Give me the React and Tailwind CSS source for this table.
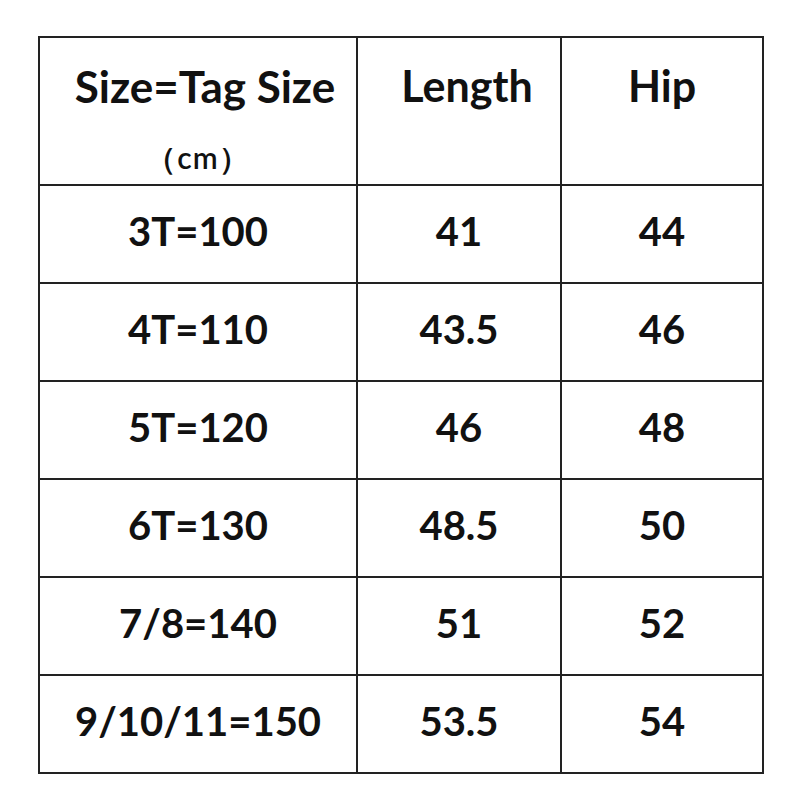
import React from "react";

const rows = [
  ["3T=100", "41", "44"],
  ["4T=110", "43.5", "46"],
  ["5T=120", "46", "48"],
  ["6T=130", "48.5", "50"],
  ["7/8=140", "51", "52"],
  ["9/10/11=150", "53.5", "54"],
];

export default function App() {
  return (
    <div className="w-[800px] h-[800px] bg-white pt-[36px] pl-[38px]" style={{ fontFamily: "Lato, 'Open Sans', sans-serif" }}>
      <table className="border-collapse text-[#111] font-bold">
        <thead>
          <tr className="h-[148px]">
            <th className="w-[318px] border-2 border-[#222] align-top pt-[24px] pl-[14px]">
              <div className="text-[44px] leading-[48px]">Size=Tag Size</div>
              <div className="text-[30px] leading-[30px] font-semibold mt-[32px] pr-[14px] tracking-[1px]">（cm）</div>
            </th>
            <th className="w-[204px] border-2 border-[#222] align-top pt-[24px] pl-[16px] text-[43px] leading-[48px]">Length</th>
            <th className="w-[202px] border-2 border-[#222] align-top pt-[24px] text-[43px] leading-[48px]">Hip</th>
          </tr>
        </thead>
        <tbody>
          {rows.map((r) => (
            <tr key={r[0]} className="h-[98px]">
              <td className="border-2 border-[#222] text-center text-[40px] leading-none pb-[6px]">{r[0]}</td>
              <td className="border-2 border-[#222] text-center text-[40px] leading-none pb-[6px]">{r[1]}</td>
              <td className="border-2 border-[#222] text-center text-[40px] leading-none pb-[6px]">{r[2]}</td>
            </tr>
          ))}
        </tbody>
      </table>
    </div>
  );
}
